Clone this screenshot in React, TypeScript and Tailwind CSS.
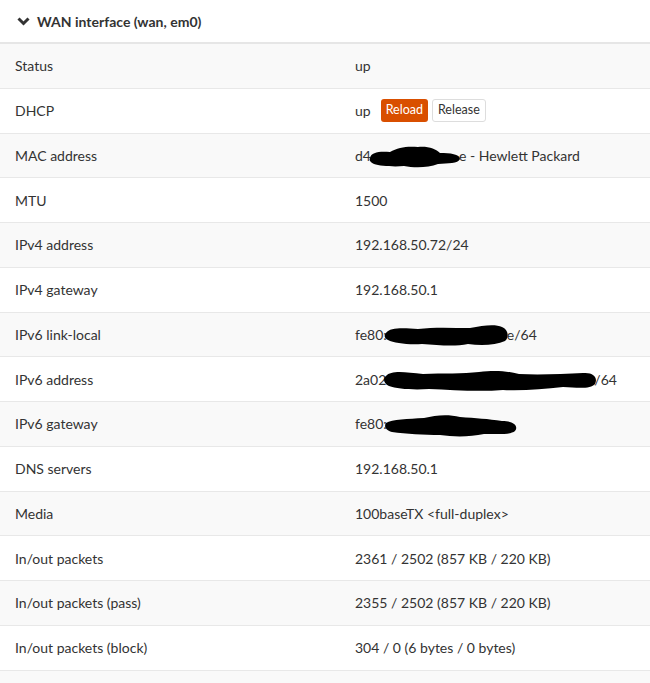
import React from "react";

type Row = { label: string; value: React.ReactNode };

const Blob = ({ w, d }: { w: number; d: string }) => (
  <svg width={w} height="24" viewBox={`0 0 ${w} 24`} className="inline-block align-middle -mx-[3px] -my-[4px]">
    <path d={d} fill="#000" />
  </svg>
);

const rows: Row[] = [
  { label: "Status", value: "up" },
  {
    label: "DHCP",
    value: (
      <span className="flex items-center">
        up
        <button className="ml-[10px] h-[23px] px-[5px] rounded-[3px] bg-[#d94f00] text-white text-[12.5px] leading-none">
          Reload
        </button>
        <button className="ml-[4px] h-[23px] px-[5px] rounded-[3px] bg-white border border-[#dddddd] text-[#333] text-[12.5px] leading-none">
          Release
        </button>
      </span>
    ),
  },
  {
    label: "MAC address",
    value: (
      <span>
        d4
        <Blob w={94} d="M2 13 C3 7 12 6 22 7 C30 2 40 1 50 2 C60 1 68 4 72 8 C82 8 92 9 92 14 C90 19 80 18 70 19 C60 23 46 23 36 21 C26 22 12 21 6 19 C2 17 1 15 2 13 Z" />
        e - Hewlett Packard
      </span>
    ),
  },
  { label: "MTU", value: "1500" },
  { label: "IPv4 address", value: "192.168.50.72/24" },
  { label: "IPv4 gateway", value: "192.168.50.1" },
  {
    label: "IPv6 link-local",
    value: (
      <span>
        fe80:
        <Blob w={126} d="M2 9 C6 3 20 4 34 5 C50 3 68 4 86 4 C100 1 112 0 118 3 C125 6 125 14 121 17 C112 21 98 22 84 20 C70 23 54 21 38 20 C24 21 10 19 4 16 C0 14 0 11 2 9 Z" />
        e/64
      </span>
    ),
  },
  {
    label: "IPv6 address",
    value: (
      <span>
        2a02
        <Blob w={214} d="M3 7 C8 1 22 3 40 5 C60 4 80 5 96 3 C112 1 124 2 136 5 C156 6 180 5 200 4 C211 3 215 9 212 15 C208 20 196 19 180 18 C160 20 140 22 120 21 C96 23 70 21 46 20 C30 21 14 20 6 17 C0 14 0 9 3 7 Z" />
        /64
      </span>
    ),
  },
  {
    label: "IPv6 gateway",
    value: (
      <span>
        fe80:
        <Blob w={134} d="M2 9 C8 5 24 5 40 4 C52 1 64 0 76 3 C92 4 104 5 118 7 C129 7 135 12 131 17 C126 21 114 20 100 20 C86 23 70 23 56 21 C40 21 22 20 8 18 C1 16 0 12 2 9 Z" />
      </span>
    ),
  },
  { label: "DNS servers", value: "192.168.50.1" },
  { label: "Media", value: "100baseTX <full-duplex>" },
  { label: "In/out packets", value: "2361 / 2502 (857 KB / 220 KB)" },
  { label: "In/out packets (pass)", value: "2355 / 2502 (857 KB / 220 KB)" },
  { label: "In/out packets (block)", value: "304 / 0 (6 bytes / 0 bytes)" },
  { label: "", value: "" },
];

export default function App() {
  return (
    <div className="w-[650px] h-[683px] overflow-hidden bg-white text-[14px] text-[#333] font-['Lato',sans-serif]">
      <div className="h-[44px] flex items-center pl-[17px] border-b-2 border-[#e6e6e6]">
        <svg width="13" height="10" viewBox="0 0 13 10" className="mr-[7px]">
          <path d="M1.5 2.5 L6.5 7.5 L11.5 2.5" stroke="#333" strokeWidth="3" fill="none" />
        </svg>
        <span className="font-bold text-[14px]">WAN interface (wan, em0)</span>
      </div>
      {rows.map((r, i) => (
        <div
          key={i}
          className={`h-[44.75px] flex items-center border-b border-[#e8e8e8] ${i % 2 === 0 ? "bg-[#f9f9f9]" : "bg-white"}`}
        >
          <div className="w-[355px] pl-[15px]">{r.label}</div>
          <div className="flex-1">{r.value}</div>
        </div>
      ))}
    </div>
  );
}
